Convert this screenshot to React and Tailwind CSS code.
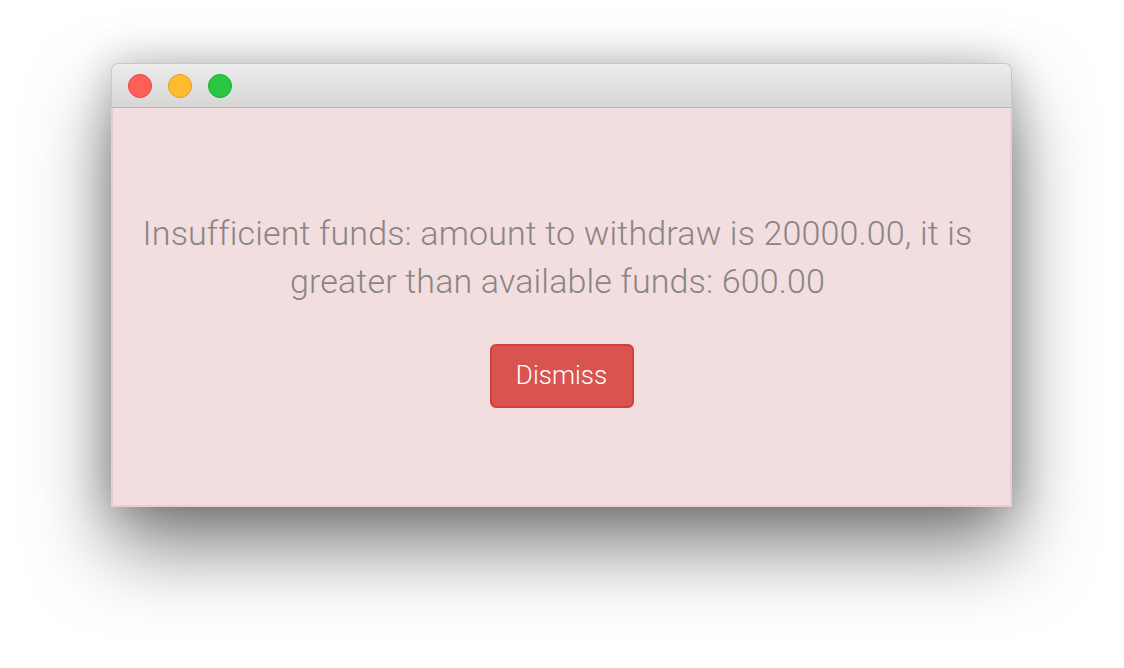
export default function App() {
  return (
    <div className="w-[1124px] h-[668px] bg-white relative overflow-hidden" style={{ fontFamily: "Roboto, 'Liberation Sans', sans-serif" }}>
      <div className="absolute left-[111px] top-[63px] w-[901px] h-[444px] rounded-t-[7px] flex flex-col shadow-[0_40px_80px_rgba(0,0,0,0.5),0_0_40px_rgba(0,0,0,0.22)]">
        <div className="h-[45px] shrink-0 rounded-t-[7px] border border-[#c8c8c8] border-b-[#b4b4b4] bg-gradient-to-b from-[#ececec] to-[#d6d6d6] flex items-center gap-[16px] pl-[16px]">
          <div className="w-[24px] h-[24px] rounded-full bg-[#fe5f57] border border-[#e2463f]" />
          <div className="w-[24px] h-[24px] rounded-full bg-[#febc2e] border border-[#e1a116]" />
          <div className="w-[24px] h-[24px] rounded-full bg-[#28c840] border border-[#1aab29]" />
        </div>
        <div className="flex-1 bg-[#f2dede] border-[2px] border-t-0 border-[#ebccd1] flex flex-col items-center justify-center pt-[3px]">
          <p className="text-[34px] leading-[48px] font-light tracking-[0.15px] text-[#8a8585] text-center pl-[26px] pr-[34px]">
            Insufficient funds: amount to withdraw is 20000.00, it is<br />greater than available funds: 600.00
          </p>
          <button className="mt-[39px] w-[144px] h-[64px] rounded-[6px] bg-[#d9534f] border-[2px] border-[#d43f3a] text-white text-[26px] font-light">
            Dismiss
          </button>
        </div>
      </div>
    </div>
  );
}
